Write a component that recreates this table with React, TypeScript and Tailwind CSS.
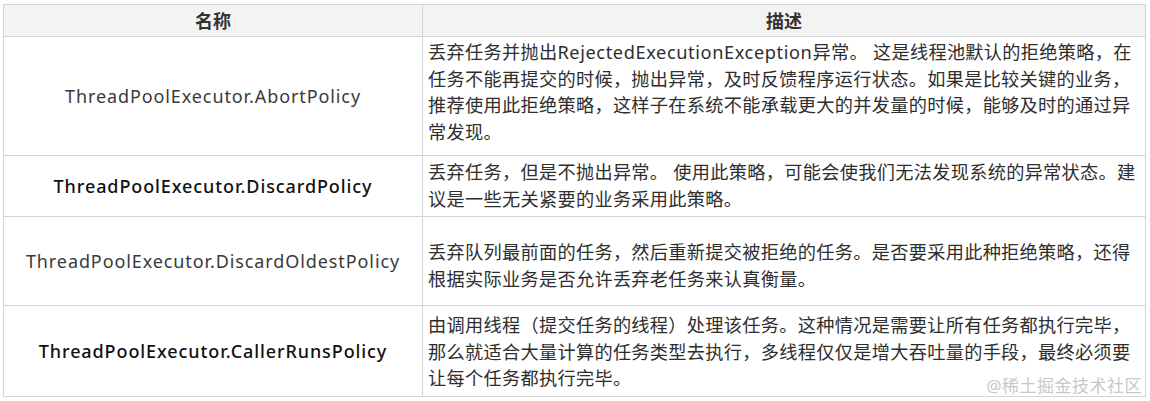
import React from "react";

const Latin = ({ children }: { children: React.ReactNode }) => (
  <span className="tracking-[0.6px]">{children}</span>
);

const rows = [
  {
    name: "ThreadPoolExecutor.AbortPolicy",
    strong: false,
    h: "h-[119px]",
    pt: "pt-[2px]",
    lines: [
      <>
        丢弃任务并抛出<Latin>RejectedExecutionException</Latin>异常。 这是线程池默认的拒绝策略，在
      </>,
      "任务不能再提交的时候，抛出异常，及时反馈程序运行状态。如果是比较关键的业务，",
      "推荐使用此拒绝策略，这样子在系统不能承载更大的并发量的时候，能够及时的通过异",
      "常发现。",
    ],
  },
  {
    name: "ThreadPoolExecutor.DiscardPolicy",
    strong: true,
    h: "h-[61px]",
    pt: "pt-[3px]",
    lines: [
      "丢弃任务，但是不抛出异常。 使用此策略，可能会使我们无法发现系统的异常状态。建",
      "议是一些无关紧要的业务采用此策略。",
    ],
  },
  {
    name: "ThreadPoolExecutor.DiscardOldestPolicy",
    strong: false,
    h: "h-[89px]",
    pt: "pt-[22px]",
    lines: [
      "丢弃队列最前面的任务，然后重新提交被拒绝的任务。是否要采用此种拒绝策略，还得",
      "根据实际业务是否允许丢弃老任务来认真衡量。",
    ],
  },
  {
    name: "ThreadPoolExecutor.CallerRunsPolicy",
    strong: true,
    h: "h-[91px]",
    pt: "pt-[6px]",
    lines: [
      "由调用线程（提交任务的线程）处理该任务。这种情况是需要让所有任务都执行完毕，",
      "那么就适合大量计算的任务类型去执行，多线程仅仅是增大吞吐量的手段，最终必须要",
      "让每个任务都执行完毕。",
    ],
  },
];

export default function App() {
  return (
    <div
      className="relative w-[1150px] h-[401px] bg-white overflow-hidden pt-[4px] pl-[3px]"
      style={{ fontFamily: '"Noto Sans", "Noto Sans CJK SC", sans-serif' }}
    >
      <table className="border-collapse w-[1142px] table-fixed">
        <colgroup>
          <col className="w-[419px]" />
          <col className="w-[723px]" />
        </colgroup>
        <thead>
          <tr className="h-[32px] bg-[#f3f3f3]">
            <th className="border border-[#d4d4d4] text-[18px] font-bold text-[#333] text-center align-middle leading-none">
              名称
            </th>
            <th className="border border-[#d4d4d4] text-[18px] font-bold text-[#333] text-center align-middle leading-none">
              描述
            </th>
          </tr>
        </thead>
        <tbody>
          {rows.map((r) => (
            <tr key={r.name} className={r.h}>
              <td
                className={
                  "border border-[#d4d4d4] text-center align-middle text-[18px] tracking-[0.9px] " +
                  (r.strong ? "text-[#111] font-medium" : "text-[#3a3a3a]")
                }
              >
                {r.name}
              </td>
              <td
                className={
                  "border border-[#d4d4d4] align-top pl-[5px] pr-0 text-[18.2px] tracking-[0.3px] leading-[26.5px] text-[#2e2e2e] " +
                  r.pt
                }
              >
                {r.lines.map((l, i) => (
                  <div key={i} className="whitespace-nowrap">
                    {l}
                  </div>
                ))}
              </td>
            </tr>
          ))}
        </tbody>
      </table>
      <div className="absolute right-[8px] bottom-[7px] text-[17px] leading-none text-[#c8c8c8] tracking-[0.5px]">
        @稀土掘金技术社区
      </div>
    </div>
  );
}
